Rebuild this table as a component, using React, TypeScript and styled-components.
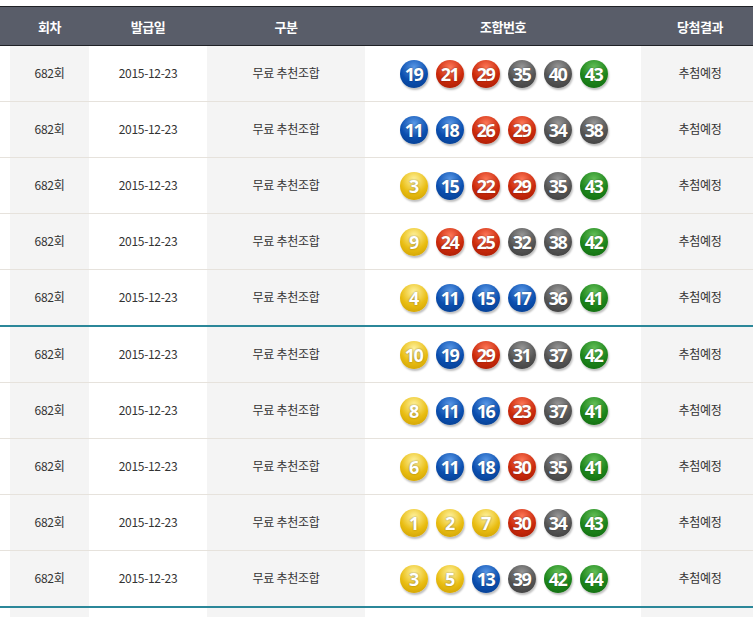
import React from 'react';
import styled, { createGlobalStyle } from 'styled-components';

const GlobalStyle = createGlobalStyle`
html, body {
    margin: 0;
    padding: 0;
    background: #ffffff;
    overflow: hidden;
}
body {
    font-family: "Noto Sans CJK KR", "Noto Sans", sans-serif;
}
`;

const COLS = '10px 79px 118px 158px 276px 118px';

const Page = styled.div`
width: 753px;
height: 617px;
padding-top: 6px;
box-sizing: border-box;
overflow: hidden;
`;

const Table = styled.div`
width: 759px;
`;

const HeadRow = styled.div`
display: grid;
grid-template-columns: ${COLS};
height: 38px;
background-color: #595d69;
border-top: 1px solid #1f2126;
border-bottom: 1px solid #1f2126;
`;

const HeadCell = styled.div`
display: flex;
align-items: center;
justify-content: center;
color: #ffffff;
font-size: 13px;
font-weight: bold;
letter-spacing: -0.5px;
`;

const Row = styled.div<{ groupEnd: boolean }>`
display: grid;
grid-template-columns: ${COLS};
height: 55px;
border-bottom: ${props => props.groupEnd ? '2px solid #2b8799' : '1px solid #e6e2dc'};
`;

const Cell = styled.div<{ shaded?: boolean }>`
display: flex;
align-items: center;
justify-content: center;
padding-bottom: 2px;
background-color: ${props => props.shaded ? '#f4f4f4' : '#ffffff'};
color: #333333;
font-size: 12px;
letter-spacing: -0.3px;
`;

const Balls = styled.div`
display: flex;
gap: 8px;
margin-left: 2px;
margin-top: 2px;
`;

const BALL_COLORS: Record<string, [string, string, string]> = {
    yellow: ['#fff3a0', '#e9bd12', '#c89a00'],
    blue: ['#5b9ae8', '#0b4fb0', '#063a86'],
    red: ['#ff7a5a', '#cc2a0c', '#9e1a04'],
    gray: ['#9a9a9a', '#555555', '#3a3a3a'],
    green: ['#66c15a', '#1d861b', '#0f630e'],
};

const ballColor = (n: number) => {
    if (n <= 10) return 'yellow';
    if (n <= 20) return 'blue';
    if (n <= 30) return 'red';
    if (n <= 40) return 'gray';
    return 'green';
};

const Ball = styled.span<{ tone: string }>`
width: 28px;
height: 28px;
border-radius: 50%;
display: flex;
align-items: center;
justify-content: center;
background: radial-gradient(circle at 50% 28%, ${p => BALL_COLORS[p.tone][0]} 0%, ${p => BALL_COLORS[p.tone][1]} 55%, ${p => BALL_COLORS[p.tone][2]} 100%);
box-shadow: 1px 2px 2px rgba(0, 0, 0, 0.25);
color: #ffffff;
font-family: "Noto Sans", "Liberation Sans", sans-serif;
font-size: 18px;
font-weight: bold;
letter-spacing: -1.5px;
text-indent: -1px;
text-shadow: 0 0 2px rgba(0, 0, 0, 0.45);
`;

const DRAWS: number[][] = [
    [19, 21, 29, 35, 40, 43],
    [11, 18, 26, 29, 34, 38],
    [3, 15, 22, 29, 35, 43],
    [9, 24, 25, 32, 38, 42],
    [4, 11, 15, 17, 36, 41],
    [10, 19, 29, 31, 37, 42],
    [8, 11, 16, 23, 37, 41],
    [6, 11, 18, 30, 35, 41],
    [1, 2, 7, 30, 34, 43],
    [3, 5, 13, 39, 42, 44],
];

function App() {
    return (
        <>
            <GlobalStyle />
            <Page>
                <Table>
                    <HeadRow>
                        <HeadCell />
                        <HeadCell>회차</HeadCell>
                        <HeadCell>발급일</HeadCell>
                        <HeadCell>구분</HeadCell>
                        <HeadCell>조합번호</HeadCell>
                        <HeadCell>당첨결과</HeadCell>
                    </HeadRow>
                    {DRAWS.map((nums, i) => (
                        <Row key={i} groupEnd={i % 5 === 4}>
                            <Cell />
                            <Cell shaded>682회</Cell>
                            <Cell>2015-12-23</Cell>
                            <Cell shaded>무료 추천조합</Cell>
                            <Cell>
                                <Balls>
                                    {nums.map(n => (
                                        <Ball key={n} tone={ballColor(n)}>{n}</Ball>
                                    ))}
                                </Balls>
                            </Cell>
                            <Cell shaded>추첨예정</Cell>
                        </Row>
                    ))}
                    {/* next page of rows starts below the fold; only the column shading shows */}
                    <Row groupEnd={false}>
                        <Cell />
                        <Cell shaded />
                        <Cell />
                        <Cell shaded />
                        <Cell />
                        <Cell shaded />
                    </Row>
                </Table>
            </Page>
        </>
    );
}

export default App;
